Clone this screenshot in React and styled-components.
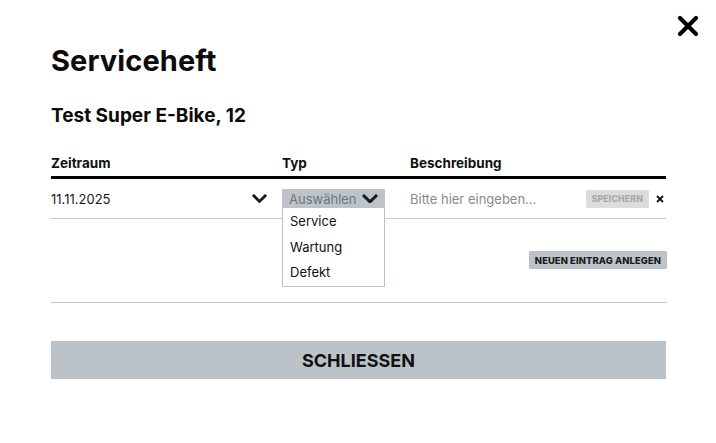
import React from "react";
import styled, { createGlobalStyle } from "styled-components";

const GlobalStyle = createGlobalStyle`
  html, body {
    margin: 0;
    padding: 0;
    background: #ffffff;
  }
  body {
    font-family: "Inter", "Noto Sans", sans-serif;
    color: #111;
  }
  * {
    box-sizing: border-box;
  }
`;

const Chevron = ({ size = 16 }) => (
  <svg width={size} height={size * 0.62} viewBox="0 0 16 10">
    <path d="M2 2l6 6 6-6" fill="none" stroke="#1e1a17" strokeWidth="3" strokeLinecap="square" />
  </svg>
);

const App = () => {
  return (
    <Page>
      <GlobalStyle />
      <CloseButton aria-label="close">
        <svg width="22" height="22" viewBox="0 0 22 22">
          <path d="M3 3l16 16M19 3L3 19" stroke="#000" strokeWidth="4.2" strokeLinecap="round" />
        </svg>
      </CloseButton>

      <Title>Serviceheft</Title>
      <Subtitle>Test Super E-Bike, 12</Subtitle>

      <HeaderRow>
        <HeadCell>Zeitraum</HeadCell>
        <HeadCell>Typ</HeadCell>
        <HeadCell>Beschreibung</HeadCell>
      </HeaderRow>

      <EntryRow>
        <DateCell>
          <span>11.11.2025</span>
          <Chevron size={15} />
        </DateCell>
        <SelectWrap>
          <SelectBox>
            <span>Auswählen</span>
            <Chevron size={16} />
          </SelectBox>
          <Dropdown>
            <Option>Service</Option>
            <Option>Wartung</Option>
            <Option>Defekt</Option>
          </Dropdown>
        </SelectWrap>
        <DescCell>
          <Placeholder>Bitte hier eingeben...</Placeholder>
          <SmallButton $disabled>SPEICHERN</SmallButton>
          <RemoveX>
            <svg width="8" height="8" viewBox="0 0 8 8">
              <path d="M1 1l6 6M7 1L1 7" stroke="#111" strokeWidth="1.8" />
            </svg>
          </RemoveX>
        </DescCell>
      </EntryRow>

      <ActionRow>
        <SmallButton>NEUEN EINTRAG ANLEGEN</SmallButton>
      </ActionRow>

      <CloseBar>SCHLIESSEN</CloseBar>
    </Page>
  );
};

const Page = styled.div`
  position: relative;
  width: 716px;
  height: 443px;
  padding: 40px 50px 0 51px;
`;

const CloseButton = styled.div`
  position: absolute;
  top: 15px;
  right: 17px;
  width: 22px;
  height: 22px;
  cursor: pointer;
`;

const Title = styled.h1`
  margin: 0;
  font-size: 29px;
  font-weight: 700;
  line-height: 42px;
  letter-spacing: 0.1px;
  color: #0b0b0b;
`;

const Subtitle = styled.h2`
  margin: 20px 0 0;
  font-size: 19px;
  font-weight: 700;
  line-height: 28px;
  color: #0b0b0b;
`;

const Grid = styled.div`
  display: grid;
  grid-template-columns: 231px 128px 1fr;
`;

const HeaderRow = styled(Grid)`
  margin-top: 23px;
  border-bottom: 3px solid #000;
  padding-bottom: 3px;
`;

const HeadCell = styled.div`
  font-size: 13.5px;
  font-weight: 700;
  line-height: 20px;
  color: #111;
`;

const EntryRow = styled(Grid)`
  height: 40px;
  padding-top: 10px;
  border-bottom: 1px solid #c3cbd1;
  font-size: 13px;
`;

const DateCell = styled.div`
  display: flex;
  align-items: center;
  justify-content: space-between;
  height: 19px;
  padding-right: 15px;
  color: #1a1a1a;
`;

const SelectWrap = styled.div`
  position: relative;
  width: 103px;
`;

const SelectBox = styled.div`
  display: flex;
  align-items: center;
  justify-content: space-between;
  height: 19px;
  padding: 0 7px 0 7px;
  background: #bcc4ca;
  color: #6f757a;
  font-size: 13px;
`;

const Dropdown = styled.div`
  position: absolute;
  top: 19px;
  left: 0;
  width: 103px;
  padding: 1px 0 0;
  background: #fff;
  border: 1px solid #b9c2c9;
  border-top: none;
  z-index: 10;
`;

const Option = styled.div`
  padding: 0 7px;
  font-size: 13px;
  line-height: 25.5px;
  color: #111;
`;

const DescCell = styled.div`
  display: flex;
  align-items: center;
  height: 19px;
`;

const Placeholder = styled.span`
  flex: 1;
  color: #8a8a8a;
  font-size: 13px;
`;

const SmallButton = styled.button`
  height: 18px;
  padding: 0 6px;
  border: none;
  border-radius: 1px;
  background: ${(p) => (p.$disabled ? "#dcdcdc" : "#bcc4ca")};
  color: ${(p) => (p.$disabled ? "#a9a9a9" : "#1a1a1a")};
  font-family: "Inter", "Noto Sans", sans-serif;
  font-size: ${(p) => (p.$disabled ? "8.8px" : "9.4px")};
  font-weight: 800;
  letter-spacing: 0.1px;
  cursor: pointer;
`;

const RemoveX = styled.span`
  display: flex;
  align-items: center;
  margin-left: 7px;
  margin-right: 2px;
`;

const ActionRow = styled.div`
  display: flex;
  justify-content: flex-end;
  align-items: flex-start;
  height: 84px;
  padding-top: 32px;
  border-bottom: 1px solid #c3cbd1;
  margin-right: -1px;
`;

const CloseBar = styled.button`
  display: block;
  width: 615px;
  height: 38px;
  margin-top: 38px;
  border: none;
  background: #bbc3c9;
  font-family: "Inter", "Noto Sans", sans-serif;
  font-size: 18px;
  font-weight: 700;
  color: #111;
  cursor: pointer;
`;

export default App;
